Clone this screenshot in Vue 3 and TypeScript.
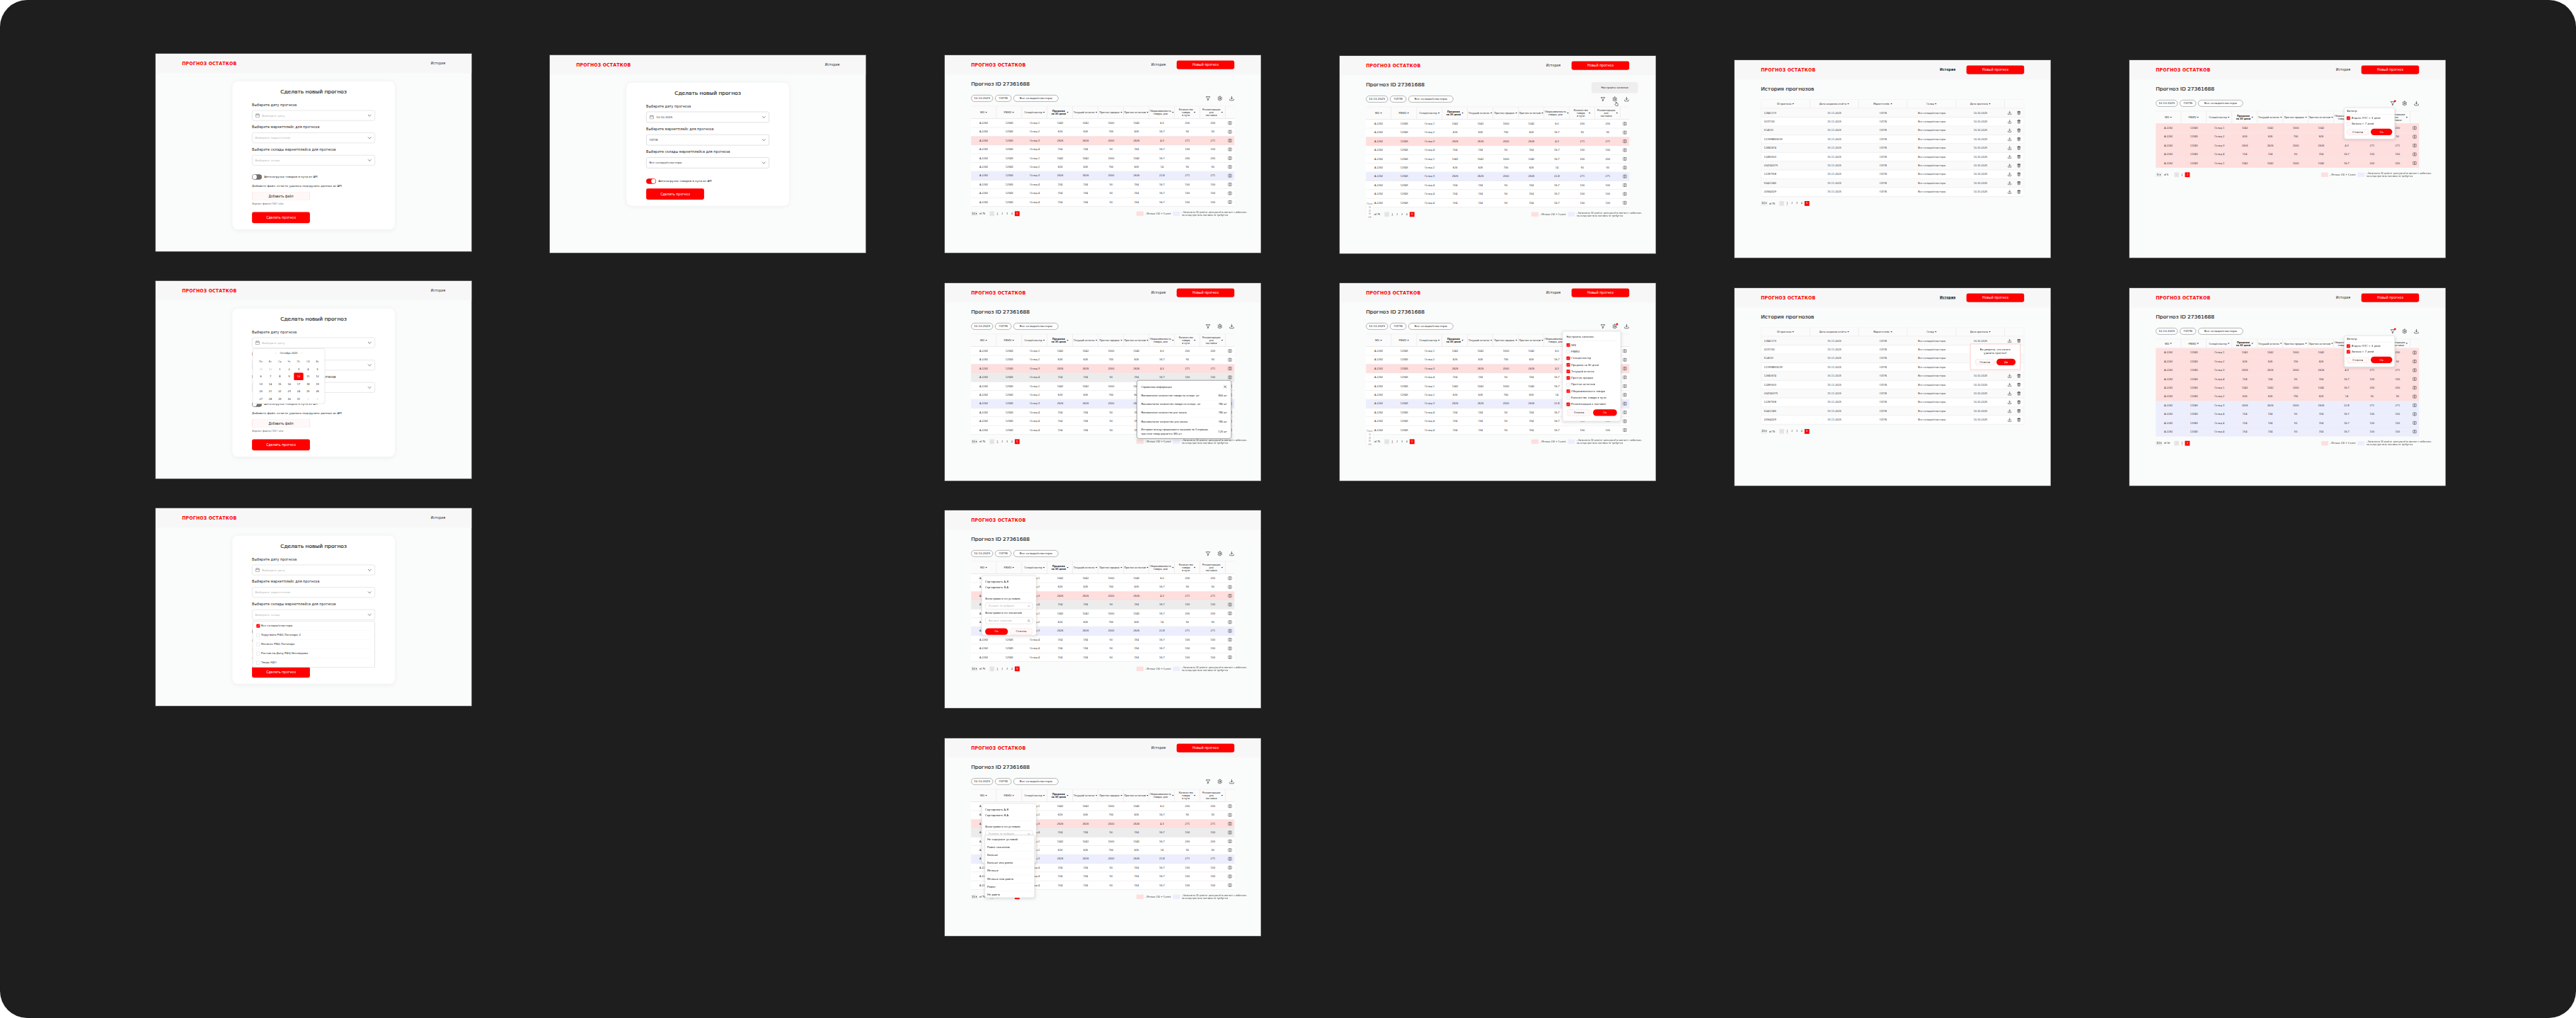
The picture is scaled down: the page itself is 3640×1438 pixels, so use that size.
<script setup lang="ts">
type Frame = {
  x: number;
  y: number;
  kind: "form" | "forecast" | "history";
  mode?: string;
  noNav?: boolean;
  rows?: string[];
  compact?: boolean;
};

const logo = "Прогноз остатков";

const frames: Frame[] = [
  { x: 220, y: 76, kind: "form", mode: "empty" },
  { x: 777, y: 78, kind: "form", mode: "filled" },
  { x: 220, y: 397, kind: "form", mode: "calendar" },
  { x: 220, y: 718, kind: "form", mode: "stores" },
  { x: 1335, y: 78, kind: "forecast" },
  { x: 1335, y: 400, kind: "forecast", mode: "info" },
  { x: 1335, y: 721, kind: "forecast", mode: "colfilter", noNav: true },
  { x: 1335, y: 1043, kind: "forecast", mode: "condition" },
  { x: 1893, y: 79, kind: "forecast", mode: "hint" },
  { x: 1893, y: 400, kind: "forecast", mode: "columns" },
  { x: 2451, y: 85, kind: "history" },
  { x: 2451, y: 407, kind: "history", mode: "confirm" },
  {
    x: 3009,
    y: 85,
    kind: "forecast",
    mode: "filter1",
    rows: ["pink", "pink", "pink", "pink", "pink"],
  },
  {
    x: 3009,
    y: 407,
    kind: "forecast",
    mode: "filter2",
    compact: true,
    rows: ["pink", "pink", "pink", "pink", "pink", "pink", "blue", "blue", "blue", "blue"],
  },
];

const headers = [
  "SKU",
  "FNSKU",
  "Склад/кластер",
  "Продажи\nза 30 дней",
  "Текущий остаток",
  "Прогноз продаж",
  "Прогноз остатков",
  "Оборачиваемость\nтовара, дни",
  "Количество\nтовара\nв пути",
  "Рекомендации\nдля\nпоставки",
];

const headerText = (f: Frame, h: string) => (f.compact ? h.replace(/\n(\S+)\n/, "\n$1 ") : h);

const baseRows = [
  ["Склад 1", "1042", "1042", "1000", "1042", "6,0", "200", "200"],
  ["Склад 2", "626", "626", "700", "626", "16,7", "50", "50"],
  ["Склад 3", "2626", "2626", "2000", "2626", "4,3", "271", "271"],
  ["Склад 4", "154", "154", "50", "154", "16,7", "100", "100"],
  ["Склад 1", "1042", "1042", "1000", "1042", "16,7", "200", "200"],
  ["Склад 2", "626", "626", "700", "626", "14", "50", "50"],
  ["Склад 3", "2626", "2626", "2000", "2626", "22,8", "271", "271"],
  ["Склад 4", "154", "154", "50", "154", "16,7", "100", "100"],
  ["Склад 4", "154", "154", "50", "154", "16,7", "100", "100"],
  ["Склад 4", "154", "154", "50", "154", "16,7", "100", "100"],
];

const rowTone = (f: Frame, i: number) => {
  if (f.rows) return f.rows[i];
  if (i === 2) return "pink";
  if (i === 6) return "blue";
  if (i === 3 && ["info", "colfilter", "condition"].includes(f.mode ?? "")) return "grey";
  return "";
};

const rowsFor = (f: Frame) => (f.rows ? baseRows.slice(0, f.rows.length) : baseRows);

const historyIds = [
  "12841173",
  "3237192",
  "514533",
  "121998859239",
  "12682674",
  "12495503",
  "204740375",
  "12287558",
  "50422345",
  "20564329",
];

const historyHeaders = ["ID прогноза", "Дата создания отчёта", "Маркетплейс", "Склад", "Дата прогноза"];

const weekDays = ["Пн", "Вт", "Ср", "Чт", "Пт", "Сб", "Вс"];
const calendarDays = [
  29, 30, 1, 2, 3, 4, 5, 6, 7, 8, 9, 10, 11, 12, 13, 14, 15, 16, 17, 18, 19, 20, 21, 22, 23, 24, 25,
  26, 27, 28, 29, 30, 31, 1, 2,
];

const stores = [
  "Все склады/кластеры",
  "Хоругвино РФЦ Логопарк 2",
  "Ногинск РФЦ Логопарк",
  "Ростов-на-Дону РФЦ Неклюдово",
  "Тверь ЭДО",
];

const infoRows = [
  ["Минимальное количество товара на складе, шт", "800 шт"],
  ["Максимальное количество товара на складе, шт", "780 шт"],
  ["Минимальное количество для заказа", "780 шт"],
  ["Максимальное количество для заказа", "780 шт"],
];

const conditions = [
  "Не содержит условий",
  "Равно значению",
  "Больше",
  "Больше или равно",
  "Меньше",
  "Меньше или равно",
  "Равно",
  "Не равно",
];

const columnChecks = [
  ["SKU", true],
  ["FNSKU", false],
  ["Склад/кластер", true],
  ["Продажи за 30 дней", true],
  ["Текущий остаток", true],
  ["Прогноз продаж", true],
  ["Прогноз остатков", false],
  ["Оборачиваемость товара", true],
  ["Количество товара в пути", false],
  ["Рекомендации к поставке", true],
] as const;

const isFilterMode = (f: Frame) => f.mode === "filter1" || f.mode === "filter2";
</script>

<template>
  <div class="canvas">
    <svg class="sprite" width="0" height="0">
      <symbol id="i-chevron" viewBox="0 0 24 24"><path d="m5 9 7 7 7-7" fill="none" stroke="currentColor" stroke-width="2.4" stroke-linecap="round" stroke-linejoin="round" /></symbol>
      <symbol id="i-calendar" viewBox="0 0 24 24"><g fill="none" stroke="currentColor" stroke-width="2"><rect x="3" y="5" width="18" height="16" rx="2" /><path d="M3 10h18M8 2v5M16 2v5" /></g></symbol>
      <symbol id="i-filter" viewBox="0 0 24 24"><path d="M3 4h18l-7 9v6l-4 2v-8z" fill="none" stroke="currentColor" stroke-width="2" stroke-linejoin="round" /></symbol>
      <symbol id="i-gear" viewBox="0 0 24 24"><g fill="none" stroke="currentColor" stroke-width="2" stroke-linecap="round" stroke-linejoin="round"><path d="M12.22 2h-.44a2 2 0 0 0-2 2v.18a2 2 0 0 1-1 1.73l-.43.25a2 2 0 0 1-2 0l-.15-.08a2 2 0 0 0-2.73.73l-.22.38a2 2 0 0 0 .73 2.73l.15.1a2 2 0 0 1 1 1.72v.51a2 2 0 0 1-1 1.74l-.15.09a2 2 0 0 0-.73 2.73l.22.38a2 2 0 0 0 2.73.73l.15-.08a2 2 0 0 1 2 0l.43.25a2 2 0 0 1 1 1.73V20a2 2 0 0 0 2 2h.44a2 2 0 0 0 2-2v-.18a2 2 0 0 1 1-1.73l.43-.25a2 2 0 0 1 2 0l.15.08a2 2 0 0 0 2.73-.73l.22-.39a2 2 0 0 0-.73-2.73l-.15-.08a2 2 0 0 1-1-1.74v-.5a2 2 0 0 1 1-1.74l.15-.09a2 2 0 0 0 .73-2.73l-.22-.38a2 2 0 0 0-2.73-.73l-.15.08a2 2 0 0 1-2 0l-.43-.25a2 2 0 0 1-1-1.73V4a2 2 0 0 0-2-2z" /><circle cx="12" cy="12" r="3" /></g></symbol>
      <symbol id="i-download" viewBox="0 0 24 24"><g fill="none" stroke="currentColor" stroke-width="2.2" stroke-linecap="round" stroke-linejoin="round"><path d="M12 3v11M7.500 10l4.500 4.500 4.500-4.500" /><path d="M3 16v3a2 2 0 0 0 2 2h14a2 2 0 0 0 2-2v-3" /></g></symbol>
      <symbol id="i-book" viewBox="0 0 24 24"><g fill="none" stroke="currentColor" stroke-width="1.800"><rect x="3" y="4" width="18" height="16" rx="2" /><path d="M12 4v16" stroke-width="3" /></g></symbol>
      <symbol id="i-trash" viewBox="0 0 24 24"><g fill="none" stroke="currentColor" stroke-width="2.200" stroke-linejoin="round"><path d="M3 6h18M9 6V3h6v3" /><path d="M5.500 6 7 21h10l1.500-15z" /><path d="M10 10v7M14 10v7" /></g></symbol>
      <symbol id="i-close" viewBox="0 0 24 24"><path d="M5 5l14 14M19 5 5 19" fill="none" stroke="currentColor" stroke-width="2.400" stroke-linecap="round" /></symbol>
      <symbol id="i-search" viewBox="0 0 24 24"><g fill="none" stroke="currentColor" stroke-width="2.200"><circle cx="11" cy="11" r="7" /><path d="m16 16 5 5" /></g></symbol>
      <symbol id="i-hand" viewBox="0 0 24 24"><path d="M9 11V4.500a1.500 1.500 0 0 1 3 0V10l5.500 1a2 2 0 0 1 1.500 2.200L18 21H9l-4.500-6a1.500 1.500 0 0 1 2.300-1.900z" fill="#fff" stroke="#222" stroke-width="1.800" stroke-linejoin="round" /></symbol>
      <symbol id="i-tick" viewBox="0 0 16 16"><path d="m3.500 8 3 3 6-6.500" fill="none" stroke="#fff" stroke-width="2" stroke-linecap="round" stroke-linejoin="round" /></symbol>
    </svg>

    <section
      v-for="(f, idx) in frames"
      :key="idx"
      class="frame"
      :style="{ left: f.x + 'px', top: f.y + 'px' }"
    >
      <header class="topbar">
        <span class="logo">{{ logo }}</span>
        <nav v-if="f.kind === 'form'" class="nav"><a class="nav-link">История</a></nav>
        <nav v-else-if="!f.noNav" class="nav">
          <a class="nav-link" :class="{ active: f.kind === 'history', under: f.mode === 'confirm' }">История</a>
          <button class="btn btn-red top-btn">Новый прогноз</button>
        </nav>
      </header>

      <!-- форма нового прогноза -->
      <div v-if="f.kind === 'form'" class="form-wrap">
        <div class="card" :class="{ filled: f.mode === 'filled' }">
          <h2 class="card-title">Сделать новый прогноз</h2>
          <div class="fields">
            <div class="field">
              <label>Выберите дату прогноза</label>
              <div class="select">
                <svg class="ic cal"><use href="#i-calendar" /></svg>
                <span :class="f.mode === 'filled' ? 'val' : 'ph'">{{ f.mode === "filled" ? "10.10.2025" : "Выберите дату" }}</span>
                <svg class="ic chev"><use href="#i-chevron" /></svg>
              </div>
              <div v-if="f.mode === 'calendar'" class="calendar">
                <div class="cal-head"><span>‹</span><span>Октябрь 2025</span><span>›</span></div>
                <div class="cal-grid">
                  <span v-for="d in weekDays" :key="d" class="cal-wd">{{ d }}</span>
                  <span
                    v-for="(d, i) in calendarDays"
                    :key="i"
                    class="cal-day"
                    :class="{ off: i < 2 || i > 32, sel: i === 11 }"
                  >{{ d }}</span>
                </div>
              </div>
            </div>
            <div class="field">
              <label>Выберите маркетплейс для прогноза</label>
              <div class="select">
                <span :class="f.mode === 'filled' ? 'val' : 'ph'">{{ f.mode === "filled" ? "OZON" : "Выберите маркетплейс" }}</span>
                <svg class="ic chev"><use href="#i-chevron" /></svg>
              </div>
            </div>
            <div class="field">
              <label>Выберите склады маркетплейса для прогноза</label>
              <div class="select">
                <span :class="f.mode === 'filled' ? 'val' : 'ph'">{{ f.mode === "filled" ? "Все склады/кластеры" : "Выберите склад" }}</span>
                <svg class="ic chev"><use href="#i-chevron" /></svg>
              </div>
              <div v-if="f.mode === 'stores'" class="stores">
                <div v-for="(s, i) in stores" :key="s" class="store">
                  <span class="check" :class="{ on: i === 0 }"><svg v-if="i === 0"><use href="#i-tick" /></svg></span>
                  {{ s }}
                </div>
              </div>
            </div>
          </div>
          <div class="toggle-row">
            <span class="toggle" :class="{ on: f.mode === 'filled' }"><i /></span>
            Автозагрузка товаров в пути из API
          </div>
          <template v-if="f.mode !== 'filled'">
            <p class="upload-note">Добавьте файл, если не удалось подгрузить данные из API</p>
            <button class="btn btn-ghost upload">Добавить файл</button>
            <p class="upload-hint">Формат файла CSV / xlsx</p>
          </template>
          <button class="btn btn-red submit">Сделать прогноз</button>
        </div>
      </div>

      <!-- таблица прогноза -->
      <main v-else-if="f.kind === 'forecast'" class="content">
        <h1 class="page-title">Прогноз ID 27361688</h1>
        <div class="toolbar">
          <div class="chips">
            <span class="chip date">10.10.2025</span>
            <span class="chip mp">OZON</span>
            <span class="chip wh">Все склады/кластеры</span>
          </div>
          <div class="tools">
            <span class="tool"><svg class="ic"><use href="#i-filter" /></svg><b v-if="isFilterMode(f)" class="dot" /></span>
            <span class="tool"><svg class="ic"><use href="#i-gear" /></svg><b v-if="f.mode === 'columns'" class="dot" /></span>
            <span class="tool"><svg class="ic"><use href="#i-download" /></svg></span>
          </div>
        </div>

        <div class="table">
          <div class="tr thead" :class="{ compact: f.compact }">
            <div v-for="(h, i) in headers" :key="h" class="th">
              <span class="th-text" :class="{ strong: i === 3 }">{{ headerText(f, h) }}</span>
              <span class="sort" :class="{ mark: f.mode === 'condition' && i === 1 }" />
            </div>
            <div class="th last" />
          </div>
          <div v-for="(r, i) in rowsFor(f)" :key="i" class="tr" :class="rowTone(f, i)">
            <div class="td">A-2262</div>
            <div class="td">12345</div>
            <div v-for="(c, j) in r" :key="j" class="td">{{ c }}</div>
            <div class="td last"><svg class="ic row-ic"><use href="#i-book" /></svg></div>
          </div>
        </div>

        <div class="foot">
          <div class="pager-wrap">
            <span class="per">{{ f.rows?.length === 5 ? 5 : 10 }} ▾</span>
            <span class="of">of {{ f.rows ? f.rows.length : 75 }}</span>
            <div class="pager">
              <span class="pg prev">‹</span>
              <span class="pg cur">1</span>
              <template v-if="!f.rows"><span class="pg">2</span><span class="pg">3</span><span class="pg">4</span></template>
              <span class="pg red">{{ f.rows ? 2 : 5 }}</span>
            </div>
          </div>
          <div class="legend">
            <i class="swatch pink" />
            <span class="legend-a">- Меньше 200 + 3 дней</span>
            <i class="swatch blue" />
            <span class="legend-b">- Запасов на 30 дней от даты расчёта хватает с избытком,<br />на склад прогноза поставка не требуется</span>
          </div>
        </div>
      </main>

      <!-- история -->
      <main v-else class="content">
        <h1 class="page-title">История прогнозов</h1>
        <div class="table hist">
          <div class="tr thead">
            <div v-for="h in historyHeaders" :key="h" class="th"><span class="th-text">{{ h }}</span><span class="sort" /></div>
            <div class="th last" />
          </div>
          <div v-for="id in historyIds" :key="id" class="tr">
            <div class="td left">{{ id }}</div>
            <div class="td">15.11.2025</div>
            <div class="td">OZON</div>
            <div class="td">Все склады/кластеры</div>
            <div class="td">10.10.2025</div>
            <div class="td last">
              <svg class="ic row-ic"><use href="#i-download" /></svg>
              <svg class="ic row-ic"><use href="#i-trash" /></svg>
            </div>
          </div>
        </div>
        <div class="foot">
          <div class="pager-wrap">
            <span class="per">10 ▾</span>
            <span class="of">of 75</span>
            <div class="pager">
              <span class="pg prev">‹</span>
              <span class="pg cur">1</span><span class="pg">2</span><span class="pg">3</span><span class="pg">4</span>
              <span class="pg red">5</span>
            </div>
          </div>
        </div>
      </main>

      <!-- всплывающие окна поверх таблицы -->
      <div v-if="f.mode === 'info'" class="pop info">
        <div class="info-head"><span>Справочная информация</span><svg class="ic close"><use href="#i-close" /></svg></div>
        <div v-for="r in infoRows" :key="r[0]" class="info-row"><span>{{ r[0] }}</span><b>{{ r[1] }}</b></div>
        <div class="info-row end"><span>Интервал между продажами и заказами на 3 периода,<br />при этом товар держится 360 шт</span><b>120 шт</b></div>
      </div>

      <div v-if="f.mode === 'colfilter' || f.mode === 'condition'" class="pop colfilter">
        <div class="cf-line">Сортировать А-Я</div>
        <div class="cf-line sep">Сортировать Я-А</div>
        <div class="cf-line cf-label">Фильтровать по условию</div>
        <div class="mini-input"><span>Условие не выбрано</span><svg class="ic mini"><use href="#i-chevron" /></svg></div>
        <div class="cf-line cf-label">Фильтровать по значению</div>
        <div class="mini-input"><span>Введите значение</span><svg class="ic mini"><use href="#i-search" /></svg></div>
        <div class="pop-btns"><button class="btn btn-red">Ок</button><button class="btn btn-ghost">Отмена</button></div>
      </div>
      <div v-if="f.mode === 'condition'" class="pop condlist">
        <div v-for="c in conditions" :key="c" class="cond">{{ c }}</div>
      </div>

      <template v-if="f.mode === 'hint'">
        <div class="hint">Настроить колонки</div>
        <svg class="hand"><use href="#i-hand" /></svg>
      </template>
      <div v-if="f.mode === 'hint' || f.mode === 'columns'" class="perlist">
        <span>Показ</span><span>10</span><span>25</span><span>50</span><span>100</span>
      </div>

      <div v-if="f.mode === 'columns'" class="pop columns">
        <div class="pop-title">Настроить колонки</div>
        <div v-for="c in columnChecks" :key="c[0]" class="chk-row">
          <span class="check" :class="{ on: c[1] }"><svg v-if="c[1]"><use href="#i-tick" /></svg></span>
          {{ c[0] }}
        </div>
        <div class="pop-btns"><button class="btn btn-ghost">Отмена</button><button class="btn btn-red">Ок</button></div>
      </div>

      <div v-if="isFilterMode(f)" class="pop filter">
        <div class="pop-title">Фильтр</div>
        <div class="chk-row">
          <span class="check on"><svg><use href="#i-tick" /></svg></span>
          Индекс ООС &lt; 3 дней
        </div>
        <div class="chk-row">
          <span class="check" :class="{ on: f.mode === 'filter2' }"><svg v-if="f.mode === 'filter2'"><use href="#i-tick" /></svg></span>
          Запасы &gt; 7 дней
        </div>
        <div class="pop-btns"><button class="btn btn-ghost">Отмена</button><button class="btn btn-red">Ок</button></div>
      </div>

      <div v-if="f.mode === 'confirm'" class="confirm">
        <p>Вы уверены, что хотите<br />удалить прогноз?</p>
        <div class="pop-btns"><button class="btn btn-ghost">Отмена</button><button class="btn btn-red">Да</button></div>
      </div>
    </section>
  </div>
</template>

<style>
html,
body {
  margin: 0;
  background: #fff;
}
</style>

<style scoped>
.canvas {
  position: relative;
  width: 3640px;
  height: 1438px;
  overflow: hidden;
  background: #1e1e1e;
  border-radius: 38px;
  font-family: "DejaVu Sans", Inter, sans-serif;
  color: #1c1c1c;
}
.sprite {
  position: absolute;
}

/* макет 1440x900, на холсте показан в масштабе 0.31 */
.frame {
  position: absolute;
  width: 1440px;
  height: 900px;
  background: #fafbfb;
  transform: scale(0.31);
  transform-origin: 0 0;
  outline: 2px solid #777;
}

.topbar {
  display: flex;
  align-items: center;
  justify-content: space-between;
  height: 88px;
  padding: 0 120px;
  background: #f7f7f7;
}
.logo {
  color: #ff0000;
  font-size: 20px;
  font-weight: 700;
  text-transform: uppercase;
  letter-spacing: 0.6px;
}
.nav {
  display: flex;
  align-items: center;
  gap: 50px;
}
.nav-link {
  font-size: 15px;
}
.nav-link.active {
  font-weight: 700;
}
.nav-link.under {
  text-decoration: underline;
}
.btn {
  border: 0;
  border-radius: 8px;
  font: inherit;
  font-size: 14px;
  padding: 0;
}
.btn-red {
  background: #ff0000;
  color: #fff;
}
.btn-ghost {
  background: #fff8f8;
  border: 2px dashed #ffc4c4;
  color: #1c1c1c;
}
.top-btn {
  width: 263px;
  height: 40px;
  font-size: 15px;
}

.ic {
  width: 24px;
  height: 24px;
  flex: none;
}

/* форма */
.form-wrap {
  display: flex;
  justify-content: center;
  padding-top: 37px;
}
.card {
  width: 740px;
  box-sizing: border-box;
  padding: 35px 90px 28px 89px;
  background: #fff;
  border-radius: 24px;
  box-shadow: 0 4px 24px rgba(0, 0, 0, 0.05);
  display: flex;
  flex-direction: column;
  align-items: flex-start;
}
.card-title {
  align-self: center;
  margin: 0 0 35px;
  font-size: 24px;
  line-height: 28px;
  font-weight: 400;
  -webkit-text-stroke: 0.5px #1c1c1c;
}
.fields {
  display: flex;
  flex-direction: column;
  gap: 20px;
  width: 100%;
}
.field {
  position: relative;
}
.field label {
  display: block;
  margin-bottom: 14px;
  font-size: 15.500px;
  line-height: 20px;
}
.select {
  display: flex;
  align-items: center;
  gap: 10px;
  height: 48px;
  box-sizing: border-box;
  padding: 0 12px;
  background: #fff;
  border: 2px solid #dcdcdc;
  border-radius: 8px;
  font-size: 13px;
}
.filled .select {
  height: 50px;
  border-color: #cfcfcf;
}
.select .ph {
  color: #b5b5b5;
}
.select .val {
  color: #333;
}
.select .chev {
  margin-left: auto;
  width: 22px;
  height: 22px;
  color: #444;
}
.select .cal {
  width: 22px;
  height: 22px;
  color: #777;
}

.calendar {
  position: absolute;
  top: calc(100% + 2px);
  left: 2px;
  z-index: 3;
  width: 331px;
  height: 253px;
  box-sizing: border-box;
  padding: 10px 15px 0;
  background: #fff;
  border: 2px solid #ddd;
  border-radius: 8px;
  font-size: 11px;
}
.cal-head {
  display: flex;
  justify-content: center;
  gap: 18px;
  height: 20px;
  line-height: 20px;
  margin-bottom: 11px;
}
.cal-grid {
  display: grid;
  grid-template-columns: repeat(7, 43px);
  grid-auto-rows: 34px;
}
.cal-wd,
.cal-day {
  display: flex;
  align-items: center;
  justify-content: center;
}
.cal-wd {
  color: #555;
}
.cal-day.off {
  color: #c8c8c8;
}
.cal-day.sel {
  background: #ff0000;
  color: #fff;
  border-radius: 4px;
}

.stores {
  position: absolute;
  top: calc(100% + 5px);
  left: 2px;
  right: 0;
  z-index: 3;
  background: #fff;
  border: 2px solid #d6d6d6;
  border-top-width: 1px;
  border-radius: 6px;
  padding: 0 16px;
  font-size: 12.500px;
}
.store {
  display: flex;
  align-items: center;
  gap: 6px;
  height: 41px;
  border-bottom: 1px solid #eee;
}
.store:last-child {
  border-bottom: 0;
}
.check {
  display: inline-flex;
  width: 16px;
  height: 16px;
  box-sizing: border-box;
  flex: none;
  border: 1.5px solid #bbb;
  border-radius: 2px;
  background: #fff;
}
.check.on {
  background: #ff0000;
  border-color: #ff0000;
}
.check svg {
  width: 100%;
  height: 100%;
}

.toggle-row {
  display: flex;
  align-items: center;
  gap: 10px;
  margin-top: 40px;
  font-size: 13px;
  line-height: 24px;
}
.filled .toggle-row {
  margin-top: 47px;
}
.toggle {
  display: inline-block;
  position: relative;
  width: 45px;
  height: 24px;
  border-radius: 12px;
  background: #6f6f6f;
}
.toggle i {
  position: absolute;
  top: 2px;
  left: 2px;
  width: 20px;
  height: 20px;
  border-radius: 50%;
  background: #fff;
}
.toggle.on {
  background: #ff0000;
}
.toggle.on i {
  left: 23px;
}
.upload-note {
  margin: 22px 0 15px;
  font-size: 13px;
  line-height: 18px;
}
.upload {
  width: 264px;
  height: 41px;
}
.upload-hint {
  margin: 7px 0 0;
  font-size: 11px;
  line-height: 14px;
  color: #666;
}
.submit {
  width: 264px;
  height: 51px;
  margin-top: 31px;
  font-size: 15px;
}
.filled .submit {
  margin-top: 21px;
}

/* контент */
.content {
  padding: 30px 120px 0;
}
.page-title {
  margin: 0;
  font-size: 24px;
  line-height: 28px;
  font-weight: 400;
  -webkit-text-stroke: 0.5px #1c1c1c;
}
.toolbar {
  display: flex;
  align-items: center;
  justify-content: space-between;
  margin-top: 35px;
}
.chips {
  display: flex;
  gap: 9px;
}
.chip {
  display: flex;
  align-items: center;
  justify-content: center;
  height: 31px;
  box-sizing: border-box;
  border: 2px solid #8a8a8a;
  border-radius: 16px;
  font-size: 13px;
  background: #fff;
}
.chip.date {
  width: 100px;
}
.chip.mp {
  width: 75px;
}
.chip.wh {
  width: 205px;
}
.tools {
  display: flex;
  gap: 30px;
}
.tool {
  position: relative;
  display: flex;
  color: #333;
}
.dot {
  position: absolute;
  top: -3px;
  right: -3px;
  width: 9px;
  height: 9px;
  border-radius: 50%;
  background: #ff0000;
}

.table {
  margin-top: 19px;
  background: #fff;
}
.tr {
  display: grid;
  grid-template-columns: repeat(10, 116px) 40px;
  height: 40px;
  border-bottom: 2px solid #e9e9e9;
  box-sizing: border-box;
}
.tr.pink {
  background: #ffdede;
}
.tr.blue {
  background: #eceefd;
}
.tr.grey {
  background: #ececec;
}
.thead {
  height: 59px;
  background: #fbfbfb;
  border-top: 2px solid #ededed;
  border-bottom-width: 3px;
}
.thead.compact {
  height: 44px;
}
.th {
  display: flex;
  align-items: center;
  justify-content: center;
  gap: 4px;
  border-right: 2px solid #e6e6e6;
  font-size: 10.500px;
  text-align: center;
  white-space: pre-line;
  line-height: 12px;
}
.th.last {
  border-right: 0;
}
.th-text.strong {
  font-weight: 700;
}
.sort {
  flex: none;
  width: 0;
  height: 0;
  border-left: 4px solid transparent;
  border-right: 4px solid transparent;
  border-top: 5px solid #333;
}
.sort.mark {
  border-top-color: #ff0000;
}
.td {
  display: flex;
  align-items: center;
  justify-content: center;
  font-size: 11px;
  color: #333;
}
.td.left {
  justify-content: flex-start;
  padding-left: 12px;
}
.row-ic {
  width: 20px;
  height: 20px;
  color: #333;
}

.hist {
  margin-top: 33px;
  border: 2px solid #eee;
  border-radius: 8px;
  overflow: hidden;
}
.hist .tr {
  grid-template-columns: repeat(5, 222px) 86px;
}
.hist .tr:nth-child(even) {
  background: #fafafa;
}
.hist .thead {
  height: 40px;
  border-top: 0;
}
.hist .td.last {
  justify-content: flex-start;
  gap: 22px;
  padding-left: 12px;
}

.foot {
  display: flex;
  align-items: center;
  justify-content: space-between;
  margin-top: 19px;
  font-size: 11px;
}
.pager-wrap {
  display: flex;
  align-items: center;
  gap: 7px;
}
.per {
  width: 30px;
  height: 20px;
  line-height: 20px;
  text-align: center;
  background: #eee;
  border-radius: 3px;
}
.of {
  width: 40px;
}
.pager {
  display: flex;
  align-items: center;
}
.pg {
  width: 22px;
  height: 22px;
  line-height: 22px;
  text-align: center;
  color: #555;
}
.pg.prev {
  background: #e6e6e6;
  border-radius: 3px;
  margin-right: 3px;
  color: #aaa;
}
.pg.cur {
  text-decoration: underline;
  text-decoration-color: #ff0000;
  text-underline-offset: 3px;
}
.pg.red {
  background: #ff0000;
  color: #fff;
  margin-left: 2px;
}
.legend {
  display: flex;
  align-items: center;
  gap: 8px;
  font-size: 9.500px;
  line-height: 13px;
  color: #444;
}
.swatch {
  width: 32px;
  height: 20px;
}
.swatch.pink {
  background: #ffdede;
}
.swatch.blue {
  background: #eceefd;
}
.legend-a {
  margin-right: 2px;
}
.legend-b {
  width: 240px;
  white-space: nowrap;
}

/* всплывающие окна */
.pop {
  position: absolute;
  z-index: 4;
  box-sizing: border-box;
  background: #fff;
  border: 2px solid #ddd;
  border-radius: 10px;
  box-shadow: 0 4px 14px rgba(0, 0, 0, 0.12);
}
.pop-btns {
  display: flex;
  justify-content: space-between;
  gap: 7px;
}
.pop-btns .btn {
  flex: 1;
  height: 30px;
  border-radius: 15px;
  font-size: 12px;
}
.pop-title {
  font-size: 12px;
  padding-bottom: 9px;
  border-bottom: 2px solid #eee;
}
.chk-row {
  display: flex;
  align-items: center;
  gap: 6px;
  height: 30px;
  font-size: 11.500px;
  white-space: nowrap;
}

.info {
  left: 875px;
  top: 442px;
  width: 432px;
  height: 267px;
  padding: 14px 18px;
  border-color: #777;
  font-size: 10.500px;
}
.info-head {
  display: flex;
  align-items: center;
  justify-content: space-between;
  height: 28px;
  margin-bottom: 8px;
}
.info-row {
  display: flex;
  align-items: center;
  justify-content: space-between;
  height: 38px;
  border-bottom: 1px solid #eee;
  line-height: 18px;
}
.info-row.end {
  height: 54px;
  border-bottom: 0;
}
.info-row b {
  font-weight: 400;
  white-space: nowrap;
}
.close {
  width: 18px;
  height: 18px;
}

.colfilter {
  left: 168px;
  top: 296px;
  width: 250px;
  height: 274px;
  padding: 14px 14px 0;
  font-size: 12px;
}
.cf-line {
  height: 27px;
  line-height: 27px;
}
.cf-line.sep {
  padding-bottom: 10px;
  border-bottom: 1px solid #eee;
  margin-bottom: 11px;
}
.cf-line.cf-label {
  margin-bottom: 5px;
  margin-top: 4px;
}
.mini-input {
  display: flex;
  align-items: center;
  justify-content: space-between;
  height: 31px;
  box-sizing: border-box;
  padding: 0 10px 0 14px;
  border: 2px solid #ddd;
  border-radius: 8px;
  color: #b5b5b5;
  font-size: 11px;
}
.mini {
  width: 14px;
  height: 14px;
  color: #555;
}
.colfilter .pop-btns {
  margin-top: 19px;
}
.condlist {
  left: 182px;
  top: 441px;
  z-index: 5;
  width: 228px;
  height: 286px;
  padding: 0 10px;
  font-size: 12px;
}
.cond {
  height: 35px;
  line-height: 35px;
  border-bottom: 1px solid #eee;
}
.cond:last-child {
  border-bottom: 0;
}

.hint {
  position: absolute;
  z-index: 4;
  left: 1147px;
  top: 119px;
  width: 213px;
  height: 51px;
  line-height: 51px;
  text-align: center;
  background: #eeeeee;
  border-radius: 10px;
  font-size: 12px;
}
.hand {
  position: absolute;
  z-index: 4;
  left: 1250px;
  top: 206px;
  width: 24px;
  height: 24px;
}
.perlist {
  position: absolute;
  z-index: 4;
  left: 120px;
  top: 667px;
  width: 32px;
  height: 77px;
  display: flex;
  flex-direction: column;
  align-items: center;
  justify-content: space-around;
  background: #fff;
  border: 1px solid #ddd;
  font-size: 8px;
  color: #777;
}
.columns {
  left: 1015px;
  top: 218px;
  width: 267px;
  height: 412px;
  padding: 18px 16px 0 17px;
}
.columns .pop-title {
  margin-bottom: 4px;
}
.columns .pop-btns {
  margin-top: 8px;
}
.filter {
  left: 978px;
  top: 216px;
  width: 232px;
  height: 144px;
  padding: 8px 10px 0;
}
.filter .pop-title {
  padding-bottom: 6px;
  margin-bottom: 3px;
}
.filter .chk-row {
  height: 26px;
}
.filter .pop-btns {
  margin-top: 9px;
}
.confirm {
  position: absolute;
  z-index: 4;
  left: 1073px;
  top: 253px;
  width: 231px;
  height: 121px;
  box-sizing: border-box;
  padding: 18px 20px 0;
  background: #fff;
  border: 3px solid #ffc6c6;
  text-align: center;
  font-size: 11px;
  line-height: 16px;
}
.confirm p {
  margin: 0 0 16px;
}
</style>
